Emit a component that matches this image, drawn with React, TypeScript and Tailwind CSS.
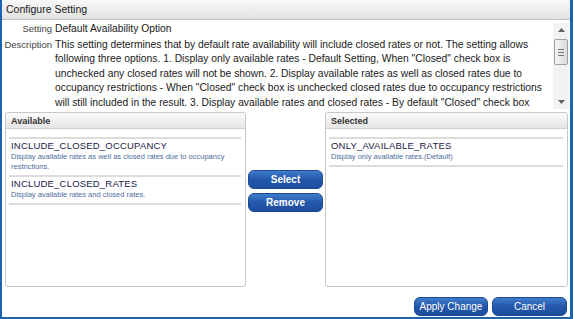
import React from 'react';

const descLines = [
  'This setting determines that by default rate availability will include closed rates or not. The setting allows',
  'following three options. 1. Display only available rates - Default Setting, When "Closed" check box is',
  'unchecked any closed rates will not be shown. 2. Display available rates as well as closed rates due to',
  'occupancy restrictions - When "Closed" check box is unchecked closed rates due to occupancy restrictions',
  'will still included in the result. 3. Display available rates and closed rates - By default "Closed" check box',
];

type Option = { code: string; desc: string[] };

const available: Option[] = [
  {
    code: 'INCLUDE_CLOSED_OCCUPANCY',
    desc: ['Display available rates as well as closed rates due to occupancy', 'restrictions.'],
  },
  { code: 'INCLUDE_CLOSED_RATES', desc: ['Display available rates and closed rates.'] },
];

const selected: Option[] = [
  { code: 'ONLY_AVAILABLE_RATES', desc: ['Display only available rates.(Default)'] },
];

function BlueButton({ label, className }: { label: string; className: string }) {
  return (
    <button
      className={`h-[19px] rounded-[6px] border border-[#1a4a94] bg-gradient-to-b from-[#3f7cca] via-[#2458ac] to-[#1d4d9e] text-[10px] text-white ${className}`}
    >
      {label}
    </button>
  );
}

function ListPanel({ title, items, className }: { title: string; items: Option[]; className: string }) {
  return (
    <div className={`flex flex-col rounded-[3px] border border-[#c8c8c8] bg-white ${className}`}>
      <div className="h-[16px] rounded-t-[3px] border-b border-[#d0d0d0] bg-gradient-to-b from-[#fbfbfb] to-[#e6e6e6] pl-[5px] text-[9px] font-bold leading-[17px] text-[#333]">
        {title}
      </div>
      <div className="pl-[3px] pr-[4px] pt-[8px]">
        <div className="border-t-2 border-[#dcdcdc]">
          {items.map((it) => (
            <div key={it.code} className="border-b-2 border-[#dcdcdc] pb-[3px] pl-[2px] pt-[1px]">
              <div className="text-[9.5px] leading-[12px] tracking-[0.2px] text-[#1a1a48]">{it.code}</div>
              {it.desc.map((d) => (
                <div key={d} className="text-[7.5px] leading-[10px] text-[#4f6c9c]">
                  {d}
                </div>
              ))}
            </div>
          ))}
        </div>
      </div>
    </div>
  );
}

export default function App() {
  return (
    <div
      className="flex h-[319px] w-[573px] flex-col border-b-2 border-l-2 border-r-[3px] border-[#1a64b0] bg-white text-[#1a1a1a]"
      style={{ fontFamily: '"Liberation Sans", Arial, sans-serif' }}
    >
      {/* title bar */}
      <div className="h-[20px] shrink-0 border-b border-[#c4c4c4] bg-gradient-to-b from-[#f8f8f8] to-[#e2e2e2] pl-[4px] text-[10.5px] leading-[19px] text-[#1a1a1a]">
        Configure Setting
      </div>

      {/* setting details with scrollbar */}
      <div className="flex h-[89px] shrink-0">
        <div className="flex-1 overflow-hidden pt-[2px]">
          <div className="flex">
            <div className="w-[50px] shrink-0 text-right text-[9.5px] leading-[14.5px] text-[#444]">Setting</div>
            <div className="pl-[3px] text-[10.3px] leading-[14.5px]">Default Availability Option</div>
          </div>
          <div className="flex pt-[1px]">
            <div className="w-[50px] shrink-0 text-right text-[9.5px] leading-[14.5px] text-[#444]">Description</div>
            <div className="pl-[3px] text-[10.3px] leading-[14.5px]">
              {descLines.map((l) => (
                <div key={l} className="whitespace-nowrap">
                  {l}
                </div>
              ))}
            </div>
          </div>
        </div>
        <div className="mr-[1px] mt-[3px] flex w-[16px] shrink-0 flex-col items-center bg-[#f2f2f2]">
          <div className="flex h-[14px] items-center justify-center">
            <svg width="7" height="4" viewBox="0 0 7 4">
              <path d="M3.5 0 L7 4 L0 4 Z" fill="#606060" />
            </svg>
          </div>
          <div className="mt-[2px] flex h-[26px] w-[14px] flex-col items-center justify-center gap-[2px] rounded-[2px] border border-[#a0a0a0] bg-gradient-to-r from-[#f4f4f4] to-[#dcdcdc]">
            <div className="h-px w-[6px] bg-[#777]" />
            <div className="h-px w-[6px] bg-[#777]" />
            <div className="h-px w-[6px] bg-[#777]" />
          </div>
          <div className="flex-1" />
          <div className="flex h-[14px] items-center justify-center">
            <svg width="7" height="4" viewBox="0 0 7 4">
              <path d="M0 0 L7 0 L3.5 4 Z" fill="#606060" />
            </svg>
          </div>
        </div>
      </div>

      {/* available / selected */}
      <div className="mt-[3px] flex h-[175px] shrink-0 pl-[3px]">
        <ListPanel title="Available" items={available} className="w-[241px]" />
        <div className="flex w-[79px] flex-col gap-[4px] px-[2px] pt-[58px]">
          <BlueButton label="Select" className="w-[75px] font-bold" />
          <BlueButton label="Remove" className="w-[75px] font-bold" />
        </div>
        <ListPanel title="Selected" items={selected} className="w-[243px]" />
      </div>

      {/* footer */}
      <div className="flex flex-1 items-start justify-end gap-[4px] pr-[3px] pt-[10px]">
        <BlueButton label="Apply Change" className="w-[74px]" />
        <BlueButton label="Cancel" className="w-[75px]" />
      </div>
    </div>
  );
}
